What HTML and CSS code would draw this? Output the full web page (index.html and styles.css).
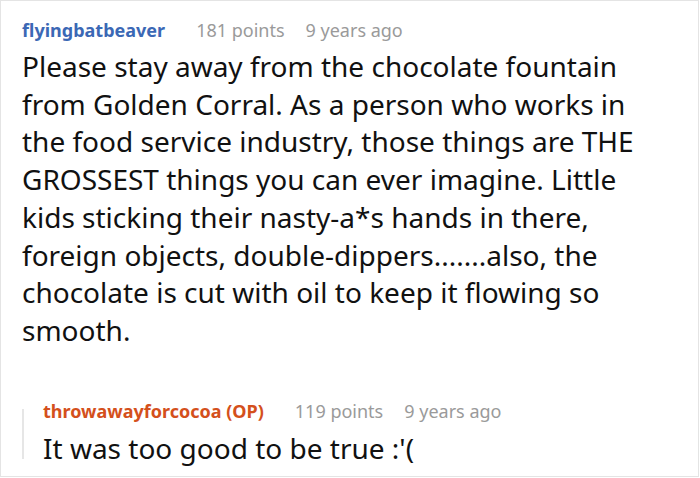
FILE: index.html
```html
<!DOCTYPE html>
<html>
<head>
<meta charset="utf-8">
<link rel="stylesheet" href="styles.css">
</head>
<body>
<div class="card">
  <div class="meta">
    <span class="user">flyingbatbeaver</span>
    <span class="info">181 points</span>
    <span class="info">9 years ago</span>
  </div>
  <p class="text">Please stay away from the chocolate fountain from Golden Corral. As a person who works in the food service industry, those things are THE GROSSEST things you can ever imagine. Little kids sticking their nasty-a*s hands in there, foreign objects, double-dippers.......also, the chocolate is cut with oil to keep it flowing so smooth.</p>
  <div class="reply">
    <div class="rule"></div>
    <div class="reply-body">
      <div class="meta">
        <span class="user op">throwawayforcocoa (OP)</span>
        <span class="info">119 points</span>
        <span class="info">9 years ago</span>
      </div>
      <p class="text">It was too good to be true :'(</p>
    </div>
  </div>
</div>
</body>
</html>
```
FILE: styles.css
```css
html, body {
  margin: 0;
  padding: 0;
  background: #fff;
}
.card {
  box-sizing: border-box;
  width: 699px;
  height: 477px;
  border: 1px solid #e4e4e4;
  padding: 17px 0 0 21px;
  font-family: "Noto Sans", "Open Sans", sans-serif;
  overflow: hidden;
}
.meta {
  display: flex;
  align-items: center;
  gap: 31px;
  font-size: 18px;
  line-height: 24px;
  height: 24px;
}
.user {
  font-weight: 700;
  color: #3b68b5;
}
.user.op {
  color: #d4501c;
}
.info {
  color: #9a9a9a;
}
.info + .info {
  margin-left: -10px;
}
.text {
  margin: 6px 0 0 0;
  font-size: 28px;
  line-height: 37.7px;
  color: #111;
  padding-right: 44px;
}
.reply {
  display: flex;
  margin-top: 49px;
  gap: 19px;
}
.rule {
  width: 2px;
  height: 50px;
  margin-top: 10px;
  background: #e6e6e6;
  flex: none;
}
.reply .text {
  margin-top: 7px;
}
```
